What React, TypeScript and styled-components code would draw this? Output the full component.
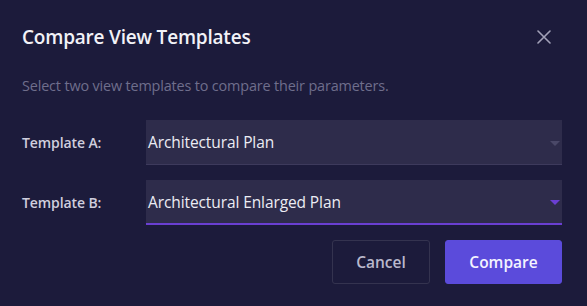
import React from "react";
import styled, { createGlobalStyle } from "styled-components";

const Global = createGlobalStyle`
  html, body { margin: 0; padding: 0; background: #1c1b3b; }
  body { font-family: "Open Sans", "Noto Sans", sans-serif; }
`;

const Dialog = styled.div`
  width: 587px;
  height: 306px;
  box-sizing: border-box;
  background: #1c1b3b;
  padding: 22px 25px 0 22px;
  display: flex;
  flex-direction: column;
`;

const Header = styled.div`
  display: flex;
  align-items: center;
  justify-content: space-between;
  height: 30px;
`;

const Title = styled.h2`
  margin: 0;
  font-size: 19px;
  font-weight: 600;
  color: #f2f2f7;
  letter-spacing: -0.2px;
`;

const CloseButton = styled.button`
  background: none;
  border: none;
  padding: 0;
  margin-right: 10px;
  width: 16px;
  height: 16px;
  display: flex;
  align-items: center;
  justify-content: center;
  cursor: pointer;
`;

const Description = styled.p`
  margin: 24px 0 0 0;
  font-size: 14.4px;
  color: #6f6e8c;
  letter-spacing: -0.15px;
`;

const Form = styled.div`
  display: grid;
  grid-template-columns: 124px 1fr;
  row-gap: 15px;
  margin-top: 25px;
  align-items: center;
`;

const Label = styled.label`
  font-size: 14px;
  font-weight: 600;
  color: #cfcede;
  letter-spacing: -0.1px;
`;

const Select = styled.div<{ $active?: boolean }>`
  height: 45px;
  box-sizing: border-box;
  background: #2e2c4b;
  border-bottom: ${(p) => (p.$active ? "2px solid #6a3fd2" : "1px solid #3d3a5c")};
  display: flex;
  align-items: center;
  justify-content: space-between;
  padding: 0 2px 0 2px;
  font-size: 15.5px;
  color: #ececf4;
  letter-spacing: -0.1px;
`;

const Caret = styled.span<{ $active?: boolean }>`
  width: 0;
  height: 0;
  margin-top: 2px;
  border-left: 5px solid transparent;
  border-right: 5px solid transparent;
  border-top: 5px solid ${(p) => (p.$active ? "#6a3fd2" : "#4a4868")};
`;

const Footer = styled.div`
  display: flex;
  justify-content: flex-end;
  gap: 15px;
  margin-top: 15px;
`;

const Button = styled.button<{ $primary?: boolean }>`
  height: 44px;
  box-sizing: border-box;
  border-radius: 3px;
  font-family: inherit;
  font-size: 15.5px;
  font-weight: 600;
  cursor: pointer;
  padding: 0;
  width: ${(p) => (p.$primary ? "117px" : "98px")};
  background: ${(p) => (p.$primary ? "#5b4bdb" : "transparent")};
  color: ${(p) => (p.$primary ? "#f4f3ff" : "#b9b8cc")};
  border: 1px solid ${(p) => (p.$primary ? "#5b4bdb" : "#34334f")};
`;

export default function App() {
  return (
    <>
      <Global />
      <Dialog>
        <Header>
          <Title>Compare View Templates</Title>
          <CloseButton aria-label="Close">
            <svg width="14" height="14" viewBox="0 0 14 14">
              <path d="M1 1 L13 13 M13 1 L1 13" stroke="#a2a1b8" strokeWidth="1.6" strokeLinecap="round" />
            </svg>
          </CloseButton>
        </Header>
        <Description>Select two view templates to compare their parameters.</Description>
        <Form>
          <Label>Template A:</Label>
          <Select>
            <span>Architectural Plan</span>
            <Caret />
          </Select>
          <Label>Template B:</Label>
          <Select $active>
            <span>Architectural Enlarged Plan</span>
            <Caret $active />
          </Select>
        </Form>
        <Footer>
          <Button>Cancel</Button>
          <Button $primary>Compare</Button>
        </Footer>
      </Dialog>
    </>
  );
}
